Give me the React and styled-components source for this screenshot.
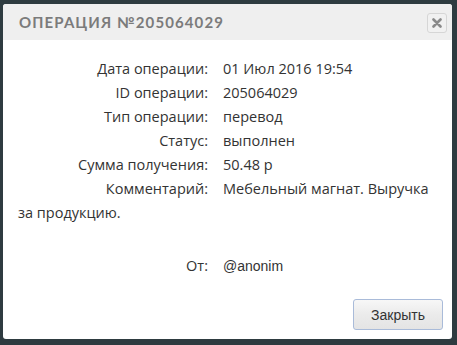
import React from 'react';
import styled, { createGlobalStyle } from 'styled-components';

const Global = createGlobalStyle`
  html, body { margin: 0; padding: 0; background: #2e3b40; }
  body { font-family: "Open Sans", "Liberation Sans", sans-serif; }
`;

const Dialog = styled.div`
  margin: 4px 0 0 3px;
  width: 449px;
  height: 335px;
  background: #fff;
  border-radius: 3px;
  overflow: hidden;
  display: flex;
  flex-direction: column;
`;

const Header = styled.div`
  height: 36px;
  background: #efefef;
  display: flex;
  align-items: center;
  justify-content: space-between;
  padding: 0 5px 0 16px;
`;

const Title = styled.h1`
  margin: 0;
  font-family: "Lato", "Liberation Sans", sans-serif;
  font-size: 15px;
  font-weight: 700;
  letter-spacing: 1.1px;
  color: #7b7b7b;
`;

const CloseX = styled.button`
  width: 20px;
  height: 20px;
  padding: 0;
  border: 1px solid #d6d6d6;
  border-radius: 3px;
  background: #f1f1f1;
  display: flex;
  align-items: center;
  justify-content: center;
  margin-top: 1px;
`;

const Body = styled.div`
  flex: 1;
  padding: 17px 20px 0 15px;
  font-size: 14.5px;
  line-height: 24px;
  color: #333;
`;

const Row = styled.div`
  margin-top: ${p => p.gap || 0}px;
`;

const Label = styled.span`
  display: inline-block;
  width: 190px;
  margin-right: 15px;
  text-align: right;
`;

const Value = styled.span`
  font-family: ${p => (p.plain ? '"Liberation Sans", Arial, sans-serif' : 'inherit')};
  font-size: ${p => (p.plain ? '14px' : 'inherit')};
`;

const Footer = styled.div`
  display: flex;
  justify-content: flex-end;
  padding: 0 9px 9px 0;
`;

const Button = styled.button`
  width: 90px;
  height: 31px;
  border: 1px solid #a9bbd9;
  border-radius: 3px;
  background: linear-gradient(#f7f7f7, #ebebeb 50%, #e4e4e4);
  font-family: "Liberation Sans", Arial, sans-serif;
  font-size: 14px;
  color: #333;
`;

const rows = [
  ['Дата операции:', '01 Июл 2016 19:54'],
  ['ID операции:', '205064029'],
  ['Тип операции:', 'перевод'],
  ['Статус:', 'выполнен'],
  ['Сумма получения:', '50.48 р'],
  ['Комментарий:', 'Мебельный магнат. Выручка за продукцию.'],
];

export default function App() {
  return (
    <>
      <Global />
      <Dialog>
        <Header>
          <Title>ОПЕРАЦИЯ №205064029</Title>
          <CloseX>
            <svg width="10" height="10" viewBox="0 0 10 10">
              <path d="M1.5 1.5 L8.5 8.5 M8.5 1.5 L1.5 8.5" stroke="#8a8a8a" strokeWidth="2.6" strokeLinecap="round" />
            </svg>
          </CloseX>
        </Header>
        <Body>
          {rows.map(([l, v]) => (
            <Row key={l}>
              <Label>{l}</Label>
              <Value>{v}</Value>
            </Row>
          ))}
          <Row gap={29}>
            <Label>От:</Label>
            <Value plain>@anonim</Value>
          </Row>
        </Body>
        <Footer>
          <Button>Закрыть</Button>
        </Footer>
      </Dialog>
    </>
  );
}
